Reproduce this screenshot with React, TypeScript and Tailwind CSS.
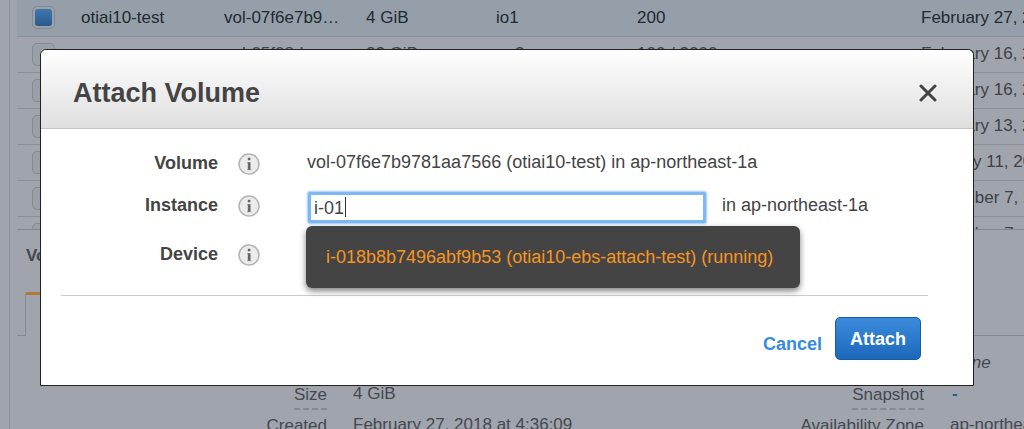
import React from 'react';
import clsx from 'clsx';

interface VolumeRow {
    name: string;
    id: string;
    size: string;
    type: string;
    iops: string;
    created: string;
    selected?: boolean;
}

const volumes: VolumeRow[] = [
    { name: 'otiai10-test', id: 'vol-07f6e7b9…', size: '4 GiB', type: 'io1', iops: '200', created: 'February 27, 2018', selected: true },
    { name: '', id: 'vol-05f08d…', size: '32 GiB', type: 'gp2', iops: '100 / 3000', created: 'February 16, 2018' },
    { name: '', id: '', size: '', type: '', iops: '', created: 'February 16, 2018' },
    { name: '', id: '', size: '', type: '', iops: '', created: 'February 13, 2018' },
    { name: '', id: '', size: '', type: '', iops: '', created: 'January 11, 2018' },
    { name: '', id: '', size: '', type: '', iops: '', created: 'December 7, 2017' },
    { name: '', id: '', size: '', type: '', iops: '', created: 'December 7, 2017' },
];

const VolumeTable: React.FC = () => (
    <div className="h-[230px] overflow-hidden border-b border-[#85898f]">
        <table className="w-full table-fixed border-collapse whitespace-nowrap text-[17px] leading-5">
            <colgroup>
                <col className="w-16" />
                <col className="w-[143px]" />
                <col className="w-[142px]" />
                <col className="w-[130px]" />
                <col className="w-[141px]" />
                <col />
                <col className="w-[103px]" />
            </colgroup>
            <tbody>
                {volumes.map((volume, index) => (
                    <tr
                        key={index}
                        className={clsx('h-9 border-b border-[#8c9097]', volume.selected ? 'bg-[#949fa9] text-[#222a31]' : 'text-[#3d4148]')}
                    >
                        <td className="p-0 pl-[15px]">
                            <input
                                type="checkbox"
                                aria-label="Select volume"
                                defaultChecked={volume.selected}
                                className="block size-[23px] appearance-none rounded-[5px] border border-[#868a91] bg-[#9b9fa7] p-[2px] before:block before:size-full before:rounded-[3px] checked:before:bg-linear-to-b checked:before:from-[#3e78ae] checked:before:to-[#285a8f]"
                            />
                        </td>
                        <td className="p-0">{volume.name}</td>
                        <td className="p-0">{volume.id}</td>
                        <td className="p-0">{volume.size}</td>
                        <td className="p-0">{volume.type}</td>
                        <td className="p-0">{volume.iops}</td>
                        <td className="overflow-hidden p-0">{volume.created}</td>
                    </tr>
                ))}
            </tbody>
        </table>
    </div>
);

const DetailTerm: React.FC<{ children: string }> = ({ children }) => (
    <dt className="pt-px text-right">
        <span className="inline-block border-b-2 border-dashed border-[#858990] pb-[3px]">{children}</span>
    </dt>
);

const VolumeDetails: React.FC = () => (
    <section className="text-[17px] leading-5 text-[#444850]">
        <h2 className="pt-4 pl-[9px] font-bold">Volumes:</h2>
        <div className="mt-[26px] flex h-11 items-stretch">
            <div className="w-2 border-b border-[#858990]" />
            <div className="w-32 rounded-t-[3px] border-x border-t-3 border-x-[#858990] border-t-[#b07a3c]" />
            <div className="grow border-b border-[#858990]" />
        </div>
        <dl className="mt-[17px] grid grid-cols-[310px_1fr_140px_100px] gap-y-[5px] whitespace-nowrap">
            <DetailTerm>Volume ID</DetailTerm>
            <dd className="pl-[26px]">vol-07f6e7b9781aa7566</dd>
            <DetailTerm>Alarm status</DetailTerm>
            <dd className="pl-[26px] italic">None</dd>
            <DetailTerm>Size</DetailTerm>
            <dd className="pl-[26px]">4 GiB</dd>
            <DetailTerm>Snapshot</DetailTerm>
            <dd className="pl-[28px] font-bold text-[#245f96]">-</dd>
            <DetailTerm>Created</DetailTerm>
            <dd className="pl-[26px]">February 27, 2018 at 4:36:09</dd>
            <DetailTerm>Availability Zone</DetailTerm>
            <dd className="overflow-hidden pl-[26px]">ap-northeast-1a</dd>
        </dl>
    </section>
);

const InfoButton: React.FC<{ label: string }> = ({ label }) => (
    <button type="button" aria-label={label} className="size-[22px] shrink-0">
        <svg viewBox="0 0 22 22" className="block size-full">
            <circle cx="11" cy="11" r="10" fill="#ececec" stroke="#b3b3b3" strokeWidth="1.5" />
            <path d="M9 9.2h3.4v7h1v1H9v-1h1v-6H9z" fill="#aaa" />
            <path d="M9.8 4.8h2.6v2.4H9.8zM9.8 9.2h2.6v7.6H9.8z" fill="#666" />
        </svg>
    </button>
);

const AttachDialog: React.FC = () => (
    <div
        role="dialog"
        aria-labelledby="dialog-title"
        className="w-full self-start rounded-t-md border border-[#222] bg-white text-[18px] leading-6 text-[#444]"
    >
        <header className="flex h-[79px] items-center justify-between rounded-t-md border-b border-[#c4c4c4] bg-linear-to-b from-white to-[#dfdfdf] pt-2 pr-9 pl-8">
            <h1 id="dialog-title" className="text-[27px] leading-8 font-bold">Attach Volume</h1>
            <button type="button" aria-label="Close">
                <svg viewBox="0 0 18 18" className="block size-[18px]" stroke="#444" strokeWidth="3" strokeLinecap="round">
                    <path d="M2 2l14 14M16 2L2 16" />
                </svg>
            </button>
        </header>

        <form className="pr-[45px] pb-[25px] pl-5">
            <div className="border-b border-[#ccc] pt-5 pb-[23px]">
                <div className="flex items-start">
                    <span className="w-[157px] pt-[2px] text-right font-bold">Volume</span>
                    <div className="mr-[47px] ml-5 pt-1"><InfoButton label="About volume" /></div>
                    <span className="pt-px">vol-07f6e7b9781aa7566 (otiai10-test) in ap-northeast-1a</span>
                </div>
                <div className="mt-3 flex items-start">
                    <label htmlFor="instance" className="w-[157px] text-right font-bold">Instance</label>
                    <div className="mr-12 ml-5 pt-[2px]"><InfoButton label="About instance" /></div>
                    <div className="relative w-[398px]">
                        <input
                            id="instance"
                            type="text"
                            defaultValue="i-01"
                            className="-mt-px mb-px block h-[31px] w-full rounded-xs border-3 border-[#7db8f5] bg-white px-[3px] pt-[2px] shadow-[0_0_2px_1px_#9ccaf8] outline-none"
                        />
                        <span className="absolute top-1 left-[37px] h-5 w-px bg-[#333]" />
                        <ul
                            role="listbox"
                            aria-label="Instances"
                            className="absolute top-[33px] -left-[2px] rounded-md bg-[#444] py-[19px] pr-[27px] pl-5 whitespace-nowrap text-[#f79421] shadow-[0_3px_6px_rgba(0,0,0,0.5)]"
                        >
                            <li role="option" aria-selected="false">i-018b8b7496abf9b53 (otiai10-ebs-attach-test) (running)</li>
                        </ul>
                    </div>
                    <span className="ml-4">in ap-northeast-1a</span>
                </div>
                <div className="mt-[18px] flex items-start">
                    <span className="w-[157px] text-right font-bold">Device</span>
                    <div className="ml-5 pt-[2px]"><InfoButton label="About device" /></div>
                </div>
            </div>
            <div className="mt-[21px] flex items-center justify-end gap-[13px] pr-[7px]">
                <a href="#cancel" className="pt-[10px] font-bold text-[#368ade]">Cancel</a>
                <button
                    type="submit"
                    className="h-[43px] rounded-[5px] border border-[#1a5c9f] bg-linear-to-b from-[#3b8bdd] to-[#1c68ba] px-[14px] font-bold text-white"
                >
                    Attach
                </button>
            </div>
        </form>
    </div>
);

const App: React.FC = () => {
    return (
        <div className="relative h-screen overflow-hidden bg-[#a0a4ac] pl-[9px] font-['Liberation_Sans',Arial,sans-serif]">
            <main className="h-full border-l border-[#8c9097] pl-[7px]">
                <VolumeTable />
                <VolumeDetails />
            </main>
            <div className="absolute inset-0 flex pt-[49px] pr-[50px] pl-10">
                <AttachDialog />
            </div>
        </div>
    );
};

export default App;
